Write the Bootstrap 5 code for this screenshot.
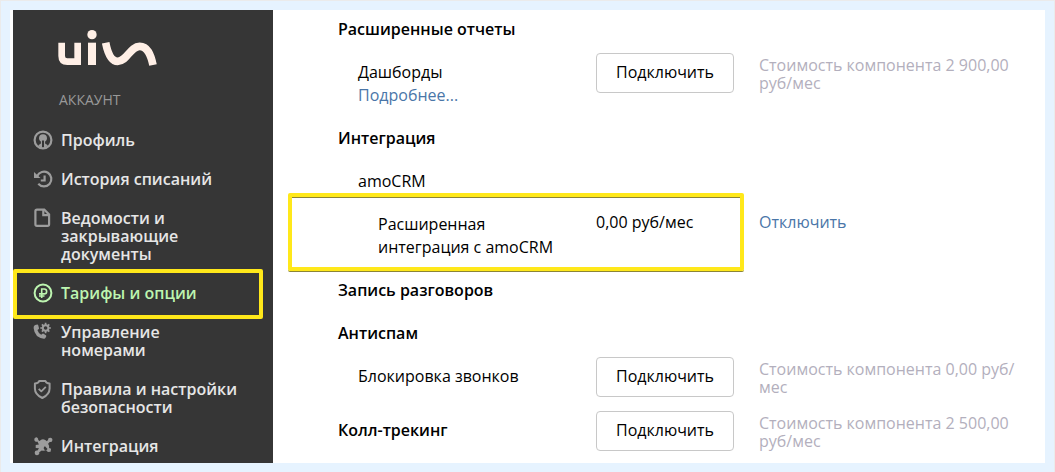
<!DOCTYPE html>
<html lang="ru">
<head>
<meta charset="utf-8">
<meta name="viewport" content="width=device-width, initial-scale=1">
<title>Тарифы и опции</title>
<link href="https://cdn.jsdelivr.net/npm/bootstrap@5.3.0/dist/css/bootstrap.min.css" rel="stylesheet">
<style>
  body { background: #e6f3ff; font-family: "Open Sans", "Noto Sans", sans-serif; font-size: 16px; line-height: 23px; color: #000; }
  .frame { padding: 9px; border: 1px solid #ebebeb; }
  .panel { background: #fff; padding-left: 3px; }
  .sidebar { width: 260px; flex: none; background: #363636; padding: 20px 20px 7px 20px; }
  .logo { display: block; margin-left: 25px; }
  .caption { margin: 25px 0 22px 26px; font-size: 14px; line-height: 18px; font-weight: 400; color: #999; }
  .menu { gap: 21px; }
  .menu a { display: flex; gap: 8px; color: #e6e6e6; font-weight: 600; line-height: 18px; text-decoration: none; }
  .menu svg { flex: none; width: 20px; height: 20px; margin: -1px 0; color: #9c9c9c; }
  .menu a.current, .menu .current svg { color: #bdf5b0; }
  .menu span { max-width: 184px; }
  .marker { position: absolute; border: 4px solid #ffe81a; border-radius: 2px; box-shadow: 0 1px 0 #8c8535, inset 0 1px 0 #8c8535; pointer-events: none; }
  .marker-menu { inset: -15px -10px -17px -20px; box-shadow: none; }
  .marker-option { top: -10px; bottom: -2px; left: -50px; width: 456px; }
  .options { padding: 0 23px 11px 65px; }
  .option { display: grid; grid-template-columns: 258px 163px minmax(0, 1fr); }
  .option-name { padding: 10px 20px 10px 0; font-size: 16px; line-height: 23px; font-weight: 400; margin: 0; }
  .option:first-child .option-name { padding-top: 8px; }
  .group { font-weight: 600; }
  .level-1 { padding-left: 20px; }
  .level-2 { padding-left: 40px; }
  .option a { color: #4a76a8; text-decoration: none; }
  .value { padding-top: 10px; line-height: 18px; }
  .cost { padding-top: 5px; line-height: 18px; color: #b3afbd; }
  .connect { width: 138px; height: 40px; margin: 2px 0 12px; padding: 0 0 2px; font-size: 16px; color: #000; background: #fff; border: 1px solid #c8c8c8; border-radius: 4px; }
</style>
</head>
<body>
<div class="frame">
  <div class="panel d-flex">
    <nav class="sidebar" aria-label="Аккаунт">
      <svg class="logo" width="100" height="36" viewBox="0 0 300 108" role="img" aria-label="UIS" fill="none" stroke="#ffefe6">
        <path d="M11 38V78Q11 95 28 95H59V38" stroke-width="20"/>
        <path d="M102 38V105" stroke-width="24"/>
        <circle cx="102" cy="14" r="14" fill="#ffefe6" stroke="none"/>
        <path d="M143 38C150 73 160 94 179 94C207 94 217 49 245 49C268 49 278 72 285 105" stroke-width="23"/>
      </svg>
      <h1 class="caption">АККАУНТ</h1>
      <ul class="menu list-unstyled d-flex flex-column mb-0">
        <li><a href="#">
          <svg viewBox="0 0 20 20" fill="none" stroke="currentColor"><circle cx="10" cy="10" r="8.400" stroke-width="2.200"/><path fill="currentColor" stroke="none" d="M10 4.300a4 4 0 0 0-4 3.900c0 1.500.8 2.600 1.900 3.200v2.200l-2.600 1.600Q7 17.700 9 18V10.500h2V18Q13 17.700 14.800 15.200L12.100 13.600v-2.200c1.100-.6 1.900-1.700 1.900-3.200A4 4 0 0 0 10 4.300z"/></svg>
          <span>Профиль</span></a></li>
        <li><a href="#">
          <svg viewBox="0 0 20 20" fill="none" stroke="currentColor" stroke-width="2.200"><path d="M4.200 7A7.400 7.400 0 1 1 5.300 14.800M11.600 6.500v5H7.800"/><path d="M1 3v6h6.500L5.300 7z" fill="currentColor" stroke="none"/></svg>
          <span>История списаний</span></a></li>
        <li><a href="#">
          <svg viewBox="0 0 20 20" fill="none" stroke="currentColor" stroke-width="2.200"><path d="M4 1.600h7.300L16.100 6.400V16.300q0 1.600-1.600 1.600H4q-1.600 0-1.600-1.600V3.200q0-1.600 1.600-1.600z"/><path d="M10.300 1.600v5.500h5.500"/></svg>
          <span>Ведомости и закрывающие документы</span></a></li>
        <li class="position-relative"><a class="current" href="#" aria-current="page">
          <svg viewBox="0 0 20 20" fill="none" stroke="currentColor"><circle cx="10" cy="10" r="8.400" stroke-width="2"/><path d="M8.700 15V6h2.500a2.400 2.400 0 0 1 0 4.900H6M6 13h5.500" stroke-width="1.600"/></svg>
          <span>Тарифы и опции</span></a>
          <div class="marker marker-menu"></div></li>
        <li><a href="#">
          <svg viewBox="0 0 20 20" fill="none" stroke="currentColor"><path fill="currentColor" stroke="none" d="M2.200 3.100L4.300 2.600q.8 0 1 .8l.7 2.800q.1.700-.5 1.100l-1.100.8q.9 3.100 3.800 4.700l1.200-1q.6-.5 1.200-.1l2.300 1.600q.6.500.3 1.200l-.8 1.500q-.5.800-1.400.7Q1.600 15.700.6 6 .5 3.700 2.200 3.100z"/><circle cx="12.600" cy="6" r="2.800" stroke-width="2"/><path d="M12.600 .7v2.200M12.600 9.100v2.200M7.300 6h2.200M15.700 6h2.200M8.900 2.300l1.500 1.500M14.800 8.200l1.500 1.500M16.300 2.300l-1.500 1.500M10.400 8.200L8.900 9.700" stroke-width="1.700"/></svg>
          <span>Управление номерами</span></a></li>
        <li><a href="#">
          <svg viewBox="0 0 20 20" fill="none" stroke="currentColor" stroke-width="2" stroke-linejoin="round"><path d="M6.200 1.900H12.400q.6 2.600 4.200 2.600V9.400q0 6-7.300 9.600Q1.900 15.400 1.900 9.400V4.500q3.700 0 4.300-2.600z"/><path d="M5.700 9.800l2.600 2.600 4.500-4.500" stroke-width="1.800"/></svg>
          <span>Правила и настройки безопасности</span></a></li>
        <li><a href="#">
          <svg viewBox="0 0 20 20" fill="currentColor"><path fill-rule="evenodd" d="M2.600 1.500a2 2 0 0 1 2.600 2.400l1.400 1q1.800-2.200 4.500-1.500 1.800.4 2.700 1.800l1.200-1.200a2.200 2.200 0 1 1 1.700 2l-1.600 1.700q1.400 1.700 1 4.300l2 .7-.5 3-2.700.4-2-2q-1.800 1.200-4.100.4l-2.600 1.800a2.300 2.300 0 1 1-1.700-1.700l1.500-2.400-3.300-.2V9l3.200-.5-1.500-2.900A2.200 2.200 0 0 1 2.600 1.500zM12 10.300a2 2 0 1 0 2.500 2.800z"/></svg>
          <span>Интеграция</span></a></li>
      </ul>
    </nav>
    <main class="options flex-grow-1">
      <div class="option"><h2 class="option-name group">Расширенные отчеты</h2></div>
      <div class="option">
        <div class="option-name level-1">Дашборды<br><a href="#">Подробнее...</a></div>
        <div><button type="button" class="connect">Подключить</button></div>
        <div class="cost">Стоимость компонента 2 900,00 руб/<wbr>мес</div>
      </div>
      <div class="option"><h2 class="option-name group">Интеграция</h2></div>
      <div class="option"><h3 class="option-name level-1">amoCRM</h3></div>
      <div class="option position-relative">
        <div class="option-name level-2">Расширенная интеграция с amoCRM</div>
        <div class="value">0,00 руб/мес</div>
        <div class="value"><a href="#">Отключить</a></div>
        <div class="marker marker-option"></div>
      </div>
      <div class="option"><h2 class="option-name group">Запись разговоров</h2></div>
      <div class="option"><h2 class="option-name group">Антиспам</h2></div>
      <div class="option">
        <div class="option-name level-1">Блокировка звонков</div>
        <div><button type="button" class="connect">Подключить</button></div>
        <div class="cost">Стоимость компонента 0,00 руб/<wbr>мес</div>
      </div>
      <div class="option">
        <h2 class="option-name group">Колл-трекинг</h2>
        <div><button type="button" class="connect mb-0">Подключить</button></div>
        <div class="cost">Стоимость компонента 2 500,00 руб/<wbr>мес</div>
      </div>
    </main>
  </div>
</div>
<script src="https://cdn.jsdelivr.net/npm/bootstrap@5.3.0/dist/js/bootstrap.bundle.min.js"></script>
</body>
</html>
